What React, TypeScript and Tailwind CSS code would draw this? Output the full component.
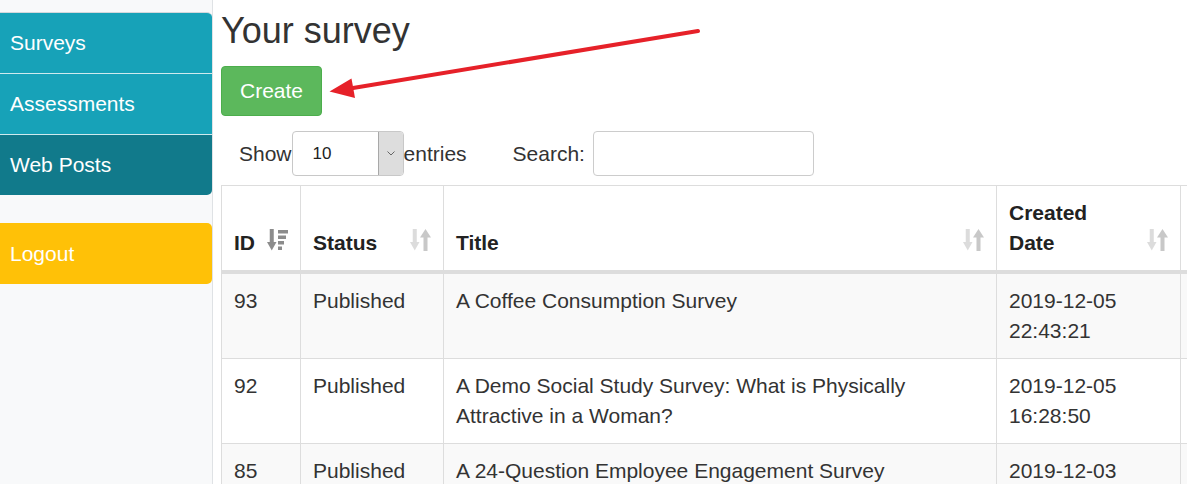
import React from "react";

const FONT = { fontFamily: '"Liberation Sans", Arial, Helvetica, sans-serif' };

function SortBoth() {
  return (
    <svg width="21" height="22" viewBox="0 0 21 22" className="block">
      <rect x="2.75" y="0" width="4" height="15" fill="#dcdcdc" />
      <polygon points="0,13 9.5,13 4.75,21.5" fill="#dcdcdc" />
      <polygon points="15.5,0 21,8.5 10,8.5" fill="#c8c8c8" />
      <rect x="13.5" y="7" width="4" height="15" fill="#c8c8c8" />
    </svg>
  );
}

function SortDesc() {
  return (
    <svg width="21" height="22" viewBox="0 0 21 22" className="block">
      <rect x="2.75" y="0" width="4" height="15" fill="#8c8c8c" />
      <polygon points="0,13 9.5,13 4.75,21.5" fill="#8c8c8c" />
      <rect x="11" y="1" width="10" height="3.5" fill="#8c8c8c" />
      <rect x="11" y="6.5" width="8" height="3.5" fill="#8c8c8c" />
      <rect x="11" y="12" width="6" height="3.5" fill="#8c8c8c" />
      <rect x="11" y="17.5" width="4" height="3.5" fill="#8c8c8c" />
    </svg>
  );
}

type Row = { id: string; title: string; date: string; time: string };
const rows: Row[] = [
  { id: "93", title: "A Coffee Consumption Survey", date: "2019-12-05", time: "22:43:21" },
  {
    id: "92",
    title: "A Demo Social Study Survey: What is Physically Attractive in a Woman?",
    date: "2019-12-05",
    time: "16:28:50",
  },
  { id: "85", title: "A 24-Question Employee Engagement Survey", date: "2019-12-03", time: "10:12:44" },
];

export default function App() {
  return (
    <div
      className="relative flex w-[1187px] h-[484px] overflow-hidden bg-white text-[#333333]"
      style={FONT}
    >
      {/* Sidebar */}
      <aside className="w-[213px] shrink-0 bg-[#f8f9fa] border-r border-[#dfe2e5] pt-[12px]">
        <nav className="w-[212px] flex flex-col text-white text-[21px] leading-[30px]">
          <div className="rounded-tr-[5px] overflow-hidden border-t border-[#d4d8dc]">
            <div className="h-[61px] bg-[#17a2b8] flex items-center pl-[10px] border-b border-[#cfeaee]">
              Surveys
            </div>
            <div className="h-[61px] bg-[#17a2b8] flex items-center pl-[10px] border-b border-[#cfeaee]">
              Assessments
            </div>
            <div className="h-[60px] bg-[#117a8b] flex items-center pl-[10px] rounded-br-[5px]">
              Web Posts
            </div>
          </div>
          <div className="mt-[28px] h-[61px] bg-[#ffc107] flex items-center pl-[10px] rounded-r-[5px]">
            Logout
          </div>
        </nav>
      </aside>

      {/* Main */}
      <main className="flex-1 min-w-0 overflow-hidden pl-[8px] pt-[12px]">
        <h1 className="text-[36px] leading-[38px] font-normal m-0 text-[#333333]">Your survey</h1>

        <button className="mt-[16px] h-[50px] w-[101px] bg-[#5cb85c] border border-[#4cae4c] rounded-[4px] text-white text-[21px] leading-[30px] flex items-center justify-center">
          Create
        </button>

        <div className="mt-[15px] h-[45px] flex items-center pl-[18px] text-[21px]">
          <span>Show</span>
          <div className="w-[112px] h-[45px] border border-[#c8c8c8] rounded-[4px] flex overflow-hidden bg-white">
            <div className="flex-1 flex items-center pl-[20px] text-[17px] text-[#222]">10</div>
            <div className="w-[25px] bg-[#dddddd] border-l border-[#a8a8a8] flex items-center justify-center">
              <svg width="8" height="5" viewBox="0 0 8 5">
                <polyline points="0.5,0.5 4,4 7.5,0.5" fill="none" stroke="#666" strokeWidth="1" />
              </svg>
            </div>
          </div>
          <span>entries</span>
          <span className="ml-[46px]">Search:</span>
          <div className="ml-[8px] w-[221px] h-[45px] border border-[#cccccc] rounded-[4px] bg-white" />
        </div>

        <table
          className="mt-[9px] table-fixed border-separate border-spacing-0 border-t border-l border-[#dddddd] text-[21px] leading-[30px] w-[1159px]"
        >
          <colgroup>
            <col className="w-[79px]" />
            <col className="w-[143px]" />
            <col className="w-[553px]" />
            <col className="w-[184px]" />
            <col className="w-[200px]" />
          </colgroup>
          <thead>
            <tr>
              {[
                { t: "ID", icon: <SortDesc /> },
                { t: "Status", icon: <SortBoth /> },
                { t: "Title", icon: <SortBoth /> },
                { t: "Created Date", icon: <SortBoth /> },
                { t: "", icon: null },
              ].map((h, i) => (
                <th
                  key={i}
                  className="relative align-bottom text-left font-bold pl-[12px] pr-[44px] pt-[12px] pb-[12px] border-r border-b-[4px] border-[#dddddd] text-[#222]"
                >
                  {h.t}
                  {h.icon && <span className="absolute right-[12px] bottom-[19px]">{h.icon}</span>}
                </th>
              ))}
            </tr>
          </thead>
          <tbody>
            {rows.map((r, i) => (
              <tr key={r.id} className={i % 2 === 0 ? "bg-[#f9f9f9]" : "bg-white"}>
                <td className="align-top px-[12px] py-[12px] border-r border-b border-[#dddddd]">{r.id}</td>
                <td className="align-top px-[12px] py-[12px] border-r border-b border-[#dddddd]">Published</td>
                <td className="align-top px-[12px] py-[12px] border-r border-b border-[#dddddd]">{r.title}</td>
                <td className="align-top px-[12px] py-[12px] border-r border-b border-[#dddddd]">
                  {r.date} {r.time}
                </td>
                <td className="align-top px-[12px] py-[12px] border-r border-b border-[#dddddd]"></td>
              </tr>
            ))}
          </tbody>
        </table>
      </main>

      {/* Annotation arrow */}
      <svg
        className="absolute left-0 top-0 pointer-events-none"
        width="1187"
        height="484"
        viewBox="0 0 1187 484"
      >
        <line x1="698" y1="31" x2="350" y2="88.5" stroke="#e62129" strokeWidth="4" strokeLinecap="round" />
        <polygon points="329.5,91.5 351.5,78.5 355,98" fill="#e62129" />
      </svg>
    </div>
  );
}
